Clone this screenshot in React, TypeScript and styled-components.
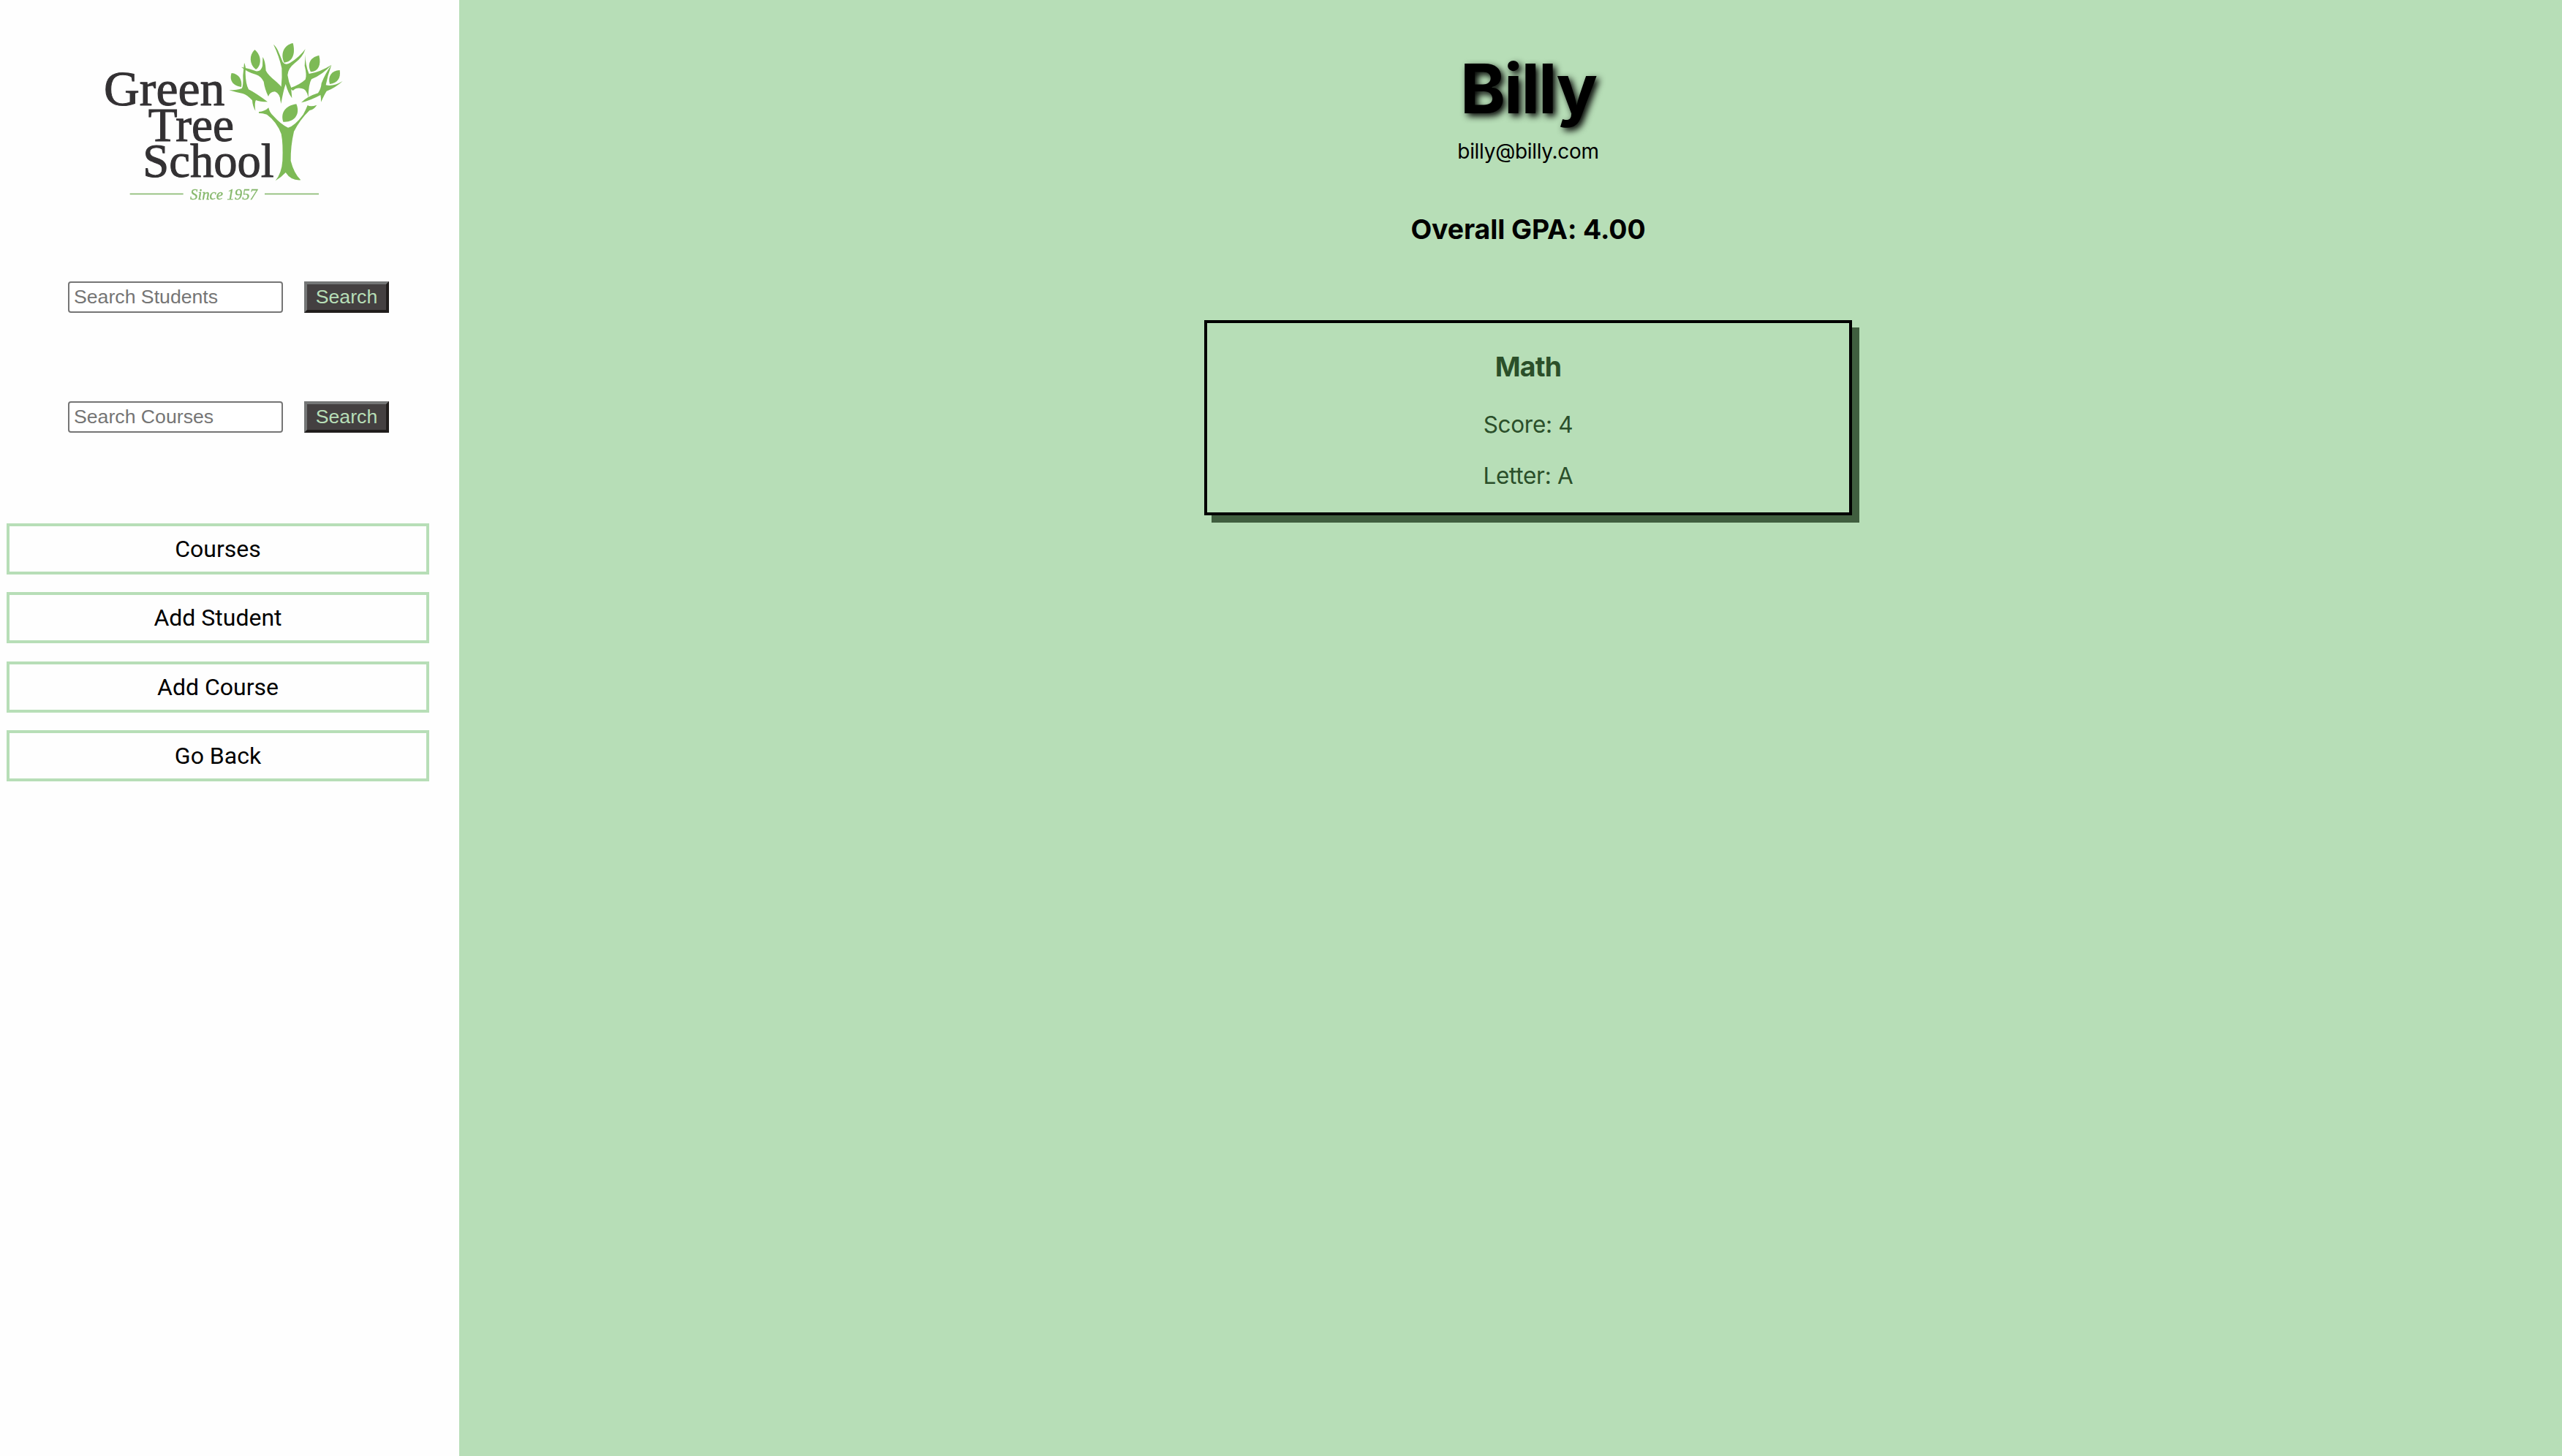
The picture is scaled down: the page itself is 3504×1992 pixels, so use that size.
import React from "react";
import styled, { createGlobalStyle } from "styled-components";

const GREEN = "#b7deb7";
const LEAF = "#7dba56";

const GlobalStyle = createGlobalStyle`
  *, *::before, *::after { box-sizing: border-box; }
  body { margin: 0; background: ${GREEN}; }
`;

const Page = styled.div`
  display: flex;
  min-height: 100vh;
  font-family: Inter, "Liberation Sans", sans-serif;
  color: #000;
`;

const Sidebar = styled.aside`
  flex: none;
  width: 628px;
  background: #fefefe;
  padding: 40px 41px 0 9px;
`;

const Logo = styled.svg`
  display: block;
  width: 380px;
  height: 250px;
  margin: 0 0 95px 111px;
  filter: blur(0.6px);
`;

const SearchForm = styled.form`
  display: flex;
  gap: 29px;
  height: 43px;
  margin: 0 0 121px 84px;
`;

const SearchInput = styled.input`
  width: 294px;
  height: 43px;
  padding: 0 6px;
  border: 2px solid #757575;
  border-radius: 4px;
  background: #fff;
  font: 26.667px "Liberation Sans", Arial, sans-serif;
  &::placeholder { color: #757575; opacity: 1; }
`;

const SearchButton = styled.button`
  width: 116px;
  height: 43px;
  padding: 0;
  border: 4px solid;
  border-color: #747676 #201d1c #201d1c #747676;
  background: #444041;
  color: ${GREEN};
  font: 26.667px "Liberation Sans", Arial, sans-serif;
`;

const Nav = styled.nav`
  display: flex;
  flex-direction: column;
  gap: 24.33px;
  padding-top: 3px;
`;

const NavLink = styled.a`
  display: flex;
  align-items: center;
  justify-content: center;
  height: 70px;
  border: 4px solid ${GREEN};
  font: 32px/38px Roboto, sans-serif;
`;

const Main = styled.main`
  flex: 1;
  display: flex;
  flex-direction: column;
  align-items: center;
  padding: 64px 0 0 48px;
`;

const Name = styled.h1`
  margin: 0;
  font-size: 94px;
  line-height: 114px;
  font-weight: 700;
  letter-spacing: -2px;
  text-shadow: 4px 4px 10px #000;
`;

const Email = styled.p`
  margin: 10px 0 0;
  font-size: 28px;
  line-height: 38px;
  letter-spacing: -0.3px;
`;

const Gpa = styled.h2`
  margin: 65px 0 0;
  font-size: 37.44px;
  line-height: 46px;
  font-weight: 700;
  letter-spacing: -0.1px;
`;

const GradeCard = styled.section`
  width: 886px;
  height: 267px;
  margin-top: 101px;
  padding-top: 37px;
  border: 4px solid #000;
  box-shadow: 10px 10px 0 #405e3f;
  color: #2b4f2a;
  text-align: center;
`;

const CourseName = styled.h3`
  margin: 0 0 37px;
  font-size: 37.44px;
  line-height: 46px;
  font-weight: 700;
  letter-spacing: -0.8px;
`;

const Grade = styled.p`
  margin: 0 0 32px;
  font-size: 31.5px;
  line-height: 38px;
  letter-spacing: -0.3px;
`;

const leaves = [
  "M842 57 C802 65 790 105 806 137 C838 134 854 104 842 57Z",
  "M685 84 C662 105 662 145 690 165 C713 150 715 108 685 84Z",
  "M590 180 C581 206 592 232 630 237 C635 208 620 182 590 180Z",
  "M949 107 C910 116 900 145 915 175 C946 173 959 146 949 107Z",
  "M1034 168 C999 169 984 196 993 225 C1025 220 1039 202 1034 168Z",
  "M856 307 C810 313 790 345 802 380 C846 384 874 350 856 307Z",
];

const figures = [
  "M762 62 Q776 74 785 98 L800 134 Q810 150 830 138 Q868 115 893 81 Q882 116 848 140 Q822 160 820 188 Q824 216 834 238 L838 283 Q822 262 812 225 Q803 250 793 306 Q786 275 794 235 Q798 200 796 160 Q785 110 762 62Z",
  "M630 155 Q665 162 690 172 Q712 174 717 150 L718 114 Q729 130 731 170 Q740 188 770 212 Q788 228 796 238 L793 300 Q788 262 768 256 Q748 256 741 276 Q726 245 722 215 Q712 194 690 186 Q655 176 630 155Z",
  "M642 138 Q650 150 647 180 Q648 225 660 247 Q690 262 738 298 Q705 298 690 291 Q683 302 688 335 Q676 315 675 292 Q655 270 636 264 Q605 258 580 250 Q615 250 632 243 Q639 235 637 190Z",
  "M893 104 Q892 145 908 183 Q955 175 1000 146 Q965 185 918 205 Q906 225 905 280 Q898 244 878 243 Q856 238 842 252 L828 242 Q870 228 893 206 Q900 190 890 150Z",
  "M1000 147 Q984 190 977 229 Q1008 236 1046 213 Q1014 242 980 254 Q970 270 957 299 Q958 282 955 270 Q915 292 876 301 Q900 276 945 262 Q957 245 959 222 Q975 180 1000 147Z",
  "M702 339 Q726 338 742 322 Q745 340 760 354 Q794 392 822 404 Q850 396 884 350 Q896 328 902 312 Q914 320 940 311 Q928 330 910 333 Q870 372 846 420 Q832 480 833 540 Q846 592 874 619 Q834 622 812 588 Q796 606 770 622 Q796 590 799 540 Q802 470 794 430 Q776 380 735 350 Q718 344 702 344Z",
];

function SchoolLogo() {
  return (
    <Logo viewBox="0 0 1140 750" role="img" aria-label="Green Tree School">
      <g fill="#333133" stroke="#333133" strokeWidth="3" fontFamily='"Liberation Serif", serif'>
        <text x="66" y="311" fontSize="203" textLength="496" lengthAdjust="spacingAndGlyphs">Green</text>
        <text x="248" y="459" fontSize="195" textLength="352" lengthAdjust="spacingAndGlyphs">Tree</text>
        <text x="226" y="605" fontSize="196" textLength="538" lengthAdjust="spacingAndGlyphs">School</text>
      </g>
      <g fill={LEAF}>
        {leaves.map((d) => <path key={d} d={d} />)}
        {figures.map((d) => <path key={d} d={d} />)}
      </g>
      <text x="420" y="698" fontSize="66" fontStyle="italic" fill="#86b86c" stroke="#86b86c" strokeWidth="1" fontFamily='"Liberation Serif", serif' textLength="276" lengthAdjust="spacingAndGlyphs">Since 1957</text>
      <path d="M173 676H392M726 676H948" stroke="#8fbd78" strokeWidth="5" />
    </Logo>
  );
}

const searches = ["Search Students", "Search Courses"];
const links = ["Courses", "Add Student", "Add Course", "Go Back"];

export default function App() {
  return (
    <Page>
      <GlobalStyle />
      <Sidebar>
        <SchoolLogo />
        {searches.map((label) => (
          <SearchForm key={label}>
            <SearchInput placeholder={label} />
            <SearchButton type="button">Search</SearchButton>
          </SearchForm>
        ))}
        <Nav>
          {links.map((label) => <NavLink key={label}>{label}</NavLink>)}
        </Nav>
      </Sidebar>
      <Main>
        <Name>Billy</Name>
        <Email>billy@billy.com</Email>
        <Gpa>Overall GPA: 4.00</Gpa>
        <GradeCard>
          <CourseName>Math</CourseName>
          <Grade>Score: 4</Grade>
          <Grade>Letter: A</Grade>
        </GradeCard>
      </Main>
    </Page>
  );
}
